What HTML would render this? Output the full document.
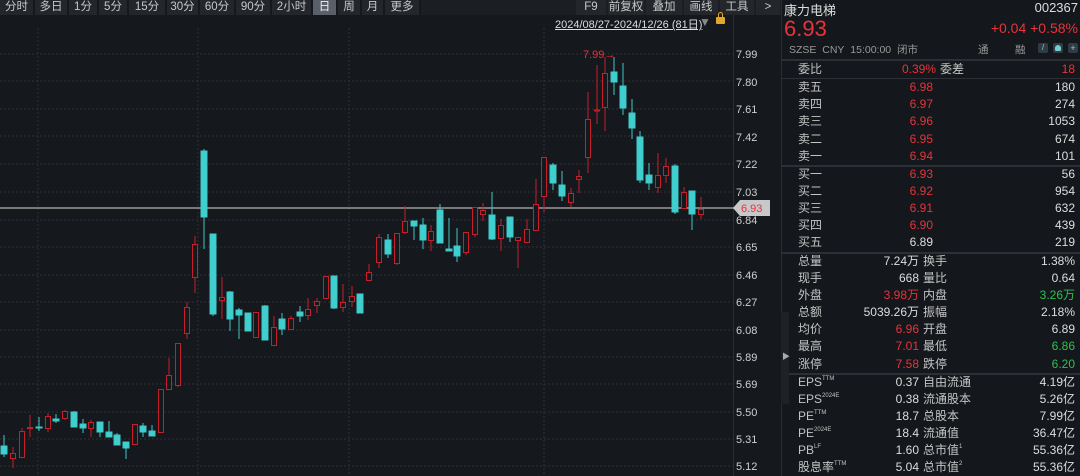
<!DOCTYPE html>
<html><head><meta charset="utf-8"><style>
*{margin:0;padding:0;box-sizing:border-box}
body{width:1080px;height:476px;background:#15181d;font-family:"Liberation Sans","Noto Sans CJK SC",sans-serif;color:#ccc;position:relative;overflow:hidden}
.tb{position:absolute;top:0;height:15px;background:#23262b;font-size:11.5px;color:#c8c8c8;line-height:15px;text-align:center}
.sel{background:#5b5f6a;color:#eee}
.abs{position:absolute;white-space:nowrap}
.rp{position:absolute;left:781px;top:0;width:299px;height:476px;background:#14171b;border-left:1px solid #2a2d33}
.row{position:absolute;left:16px;width:279px;height:17px;font-size:12px;line-height:17px}
.row span{position:absolute}
.l1{left:0;color:#c4c4c4}
.v1{right:158px;color:#ddd}
.l2{left:125px;color:#c4c4c4}
.v2{right:2px;color:#ddd}
.pb{right:144px}
.red{color:#e8333b!important}
.grn{color:#2cc04e!important}
.sep{position:absolute;left:0;width:299px;height:2px;background:#2c2f35}
sup{font-size:6px;vertical-align:top;line-height:10px}
</style></head><body>
<div class="tb" style="left:0;width:33px">分时</div>
<div class="tb" style="left:35px;width:32px">多日</div>
<div class="tb" style="left:69px;width:28px">1分</div>
<div class="tb" style="left:99px;width:28px">5分</div>
<div class="tb" style="left:129px;width:36px">15分</div>
<div class="tb" style="left:167px;width:31px">30分</div>
<div class="tb" style="left:200px;width:34px">60分</div>
<div class="tb" style="left:236px;width:34px">90分</div>
<div class="tb" style="left:272px;width:39px">2小时</div>
<div class="tb sel" style="left:313px;width:23px">日</div>
<div class="tb" style="left:338px;width:22px">周</div>
<div class="tb" style="left:362px;width:21px">月</div>
<div class="tb" style="left:385px;width:34px">更多</div>
<div class="tb" style="left:421px;width:360px;background:#1b1e23"></div>
<div class="tb" style="left:576px;width:30px">F9</div>
<div class="tb" style="left:608px;width:36px">前复权</div>
<div class="tb" style="left:646px;width:36px">叠加</div>
<div class="tb" style="left:684px;width:34px">画线</div>
<div class="tb" style="left:720px;width:34px">工具</div>
<div class="tb" style="left:756px;width:24px">&gt;</div>

<div class="abs" style="left:555px;top:16px;font-size:11px;color:#ddd;text-decoration:underline">2024/08/27-2024/12/26 (81日)</div>
<div class="abs" style="left:699px;top:15px;font-size:12px;color:#888">▼</div>
<div class="abs" style="left:716px;top:17px;width:9px;height:7px;background:#e0a630;border-radius:1px"></div>
<div class="abs" style="left:718px;top:12px;width:5px;height:7px;border:1.5px solid #e0a630;border-bottom:none;border-radius:3px 3px 0 0"></div>

<svg class="abs" style="left:0;top:0" width="781" height="476">
<g stroke="#2e3137" stroke-dasharray="2,2" stroke-width="1">
<line x1="0" x2="733" y1="54" y2="54"/><line x1="0" x2="733" y1="81" y2="81"/><line x1="0" x2="733" y1="109" y2="109"/><line x1="0" x2="733" y1="136" y2="136"/><line x1="0" x2="733" y1="164" y2="164"/><line x1="0" x2="733" y1="192" y2="192"/><line x1="0" x2="733" y1="220" y2="220"/><line x1="0" x2="733" y1="247" y2="247"/><line x1="0" x2="733" y1="275" y2="275"/><line x1="0" x2="733" y1="302" y2="302"/><line x1="0" x2="733" y1="330" y2="330"/><line x1="0" x2="733" y1="357" y2="357"/><line x1="0" x2="733" y1="384" y2="384"/><line x1="0" x2="733" y1="412" y2="412"/><line x1="0" x2="733" y1="439" y2="439"/><line x1="0" x2="733" y1="466" y2="466"/>
<line x1="38" x2="38" y1="28" y2="476"/><line x1="198" x2="198" y1="28" y2="476"/><line x1="349" x2="349" y1="28" y2="476"/><line x1="544" x2="544" y1="28" y2="476"/>
</g>
<line x1="733.5" x2="733.5" y1="15" y2="476" stroke="#2a2d33"/>
<line x1="0" x2="740" y1="208" y2="208" stroke="#9a9a9a" stroke-width="1.5"/>
<polygon points="733,208 740,200 770,200 770,216 740,216" fill="#c8c8c8"/>
<text x="741" y="212" font-size="11" fill="#e8333b" font-family="Liberation Sans">6.93</text>
<g font-size="11" fill="#cfcfcf" font-family="Liberation Sans">
<text x="736" y="58">7.99</text><text x="736" y="86">7.80</text><text x="736" y="113">7.61</text><text x="736" y="141">7.42</text><text x="736" y="168">7.22</text><text x="736" y="196">7.03</text><text x="736" y="224">6.84</text><text x="736" y="251">6.65</text><text x="736" y="279">6.46</text><text x="736" y="306">6.27</text><text x="736" y="334">6.08</text><text x="736" y="361">5.89</text><text x="736" y="388">5.69</text><text x="736" y="416">5.50</text><text x="736" y="443">5.31</text><text x="736" y="470">5.12</text>
</g>
<text x="583" y="58" font-size="11" fill="#e8333b" font-family="Liberation Sans">7.99→</text>
<g stroke-width="1">
<g stroke="#3ec9c9" fill="#3fcfcf">
<line x1="4" x2="4" y1="435" y2="457"/><rect x="1" y="446" width="6" height="8"/>
<line x1="39" x2="39" y1="417" y2="431"/><rect x="36" y="427" width="6" height="1"/>
<line x1="56" x2="56" y1="414" y2="423"/><rect x="53" y="419" width="6" height="2"/>
<line x1="74" x2="74" y1="411" y2="427"/><rect x="71" y="412" width="6" height="15"/>
<line x1="83" x2="83" y1="419" y2="433"/><rect x="80" y="424" width="6" height="4"/>
<line x1="100" x2="100" y1="422" y2="437"/><rect x="97" y="422" width="6" height="10"/>
<line x1="109" x2="109" y1="421" y2="437"/><rect x="106" y="432" width="6" height="5"/>
<line x1="117" x2="117" y1="433" y2="445"/><rect x="114" y="435" width="6" height="10"/>
<line x1="126" x2="126" y1="442" y2="459"/><rect x="123" y="442" width="6" height="6"/>
<line x1="143" x2="143" y1="423" y2="437"/><rect x="140" y="426" width="6" height="6"/>
<line x1="152" x2="152" y1="425" y2="436"/><rect x="149" y="431" width="6" height="5"/>
<line x1="204" x2="204" y1="149" y2="249"/><rect x="201" y="151" width="6" height="66"/>
<line x1="213" x2="213" y1="234" y2="316"/><rect x="210" y="234" width="6" height="80"/>
<line x1="230" x2="230" y1="291" y2="331"/><rect x="227" y="292" width="6" height="27"/>
<line x1="239" x2="239" y1="308" y2="339"/><rect x="236" y="310" width="6" height="5"/>
<line x1="248" x2="248" y1="313" y2="331"/><rect x="245" y="313" width="6" height="18"/>
<line x1="265" x2="265" y1="305" y2="340"/><rect x="262" y="306" width="6" height="34"/>
<line x1="282" x2="282" y1="313" y2="335"/><rect x="279" y="319" width="6" height="10"/>
<line x1="300" x2="300" y1="306" y2="322"/><rect x="297" y="312" width="6" height="4"/>
<line x1="334" x2="334" y1="276" y2="309"/><rect x="331" y="276" width="6" height="32"/>
<line x1="360" x2="360" y1="294" y2="313"/><rect x="357" y="294" width="6" height="19"/>
<line x1="388" x2="388" y1="234" y2="258"/><rect x="385" y="240" width="6" height="14"/>
<line x1="414" x2="414" y1="221" y2="240"/><rect x="411" y="221" width="6" height="5"/>
<line x1="423" x2="423" y1="218" y2="249"/><rect x="420" y="225" width="6" height="15"/>
<line x1="440" x2="440" y1="204" y2="243"/><rect x="437" y="210" width="6" height="33"/>
<line x1="449" x2="449" y1="218" y2="251"/><rect x="446" y="249" width="6" height="2"/>
<line x1="457" x2="457" y1="228" y2="262"/><rect x="454" y="246" width="6" height="10"/>
<line x1="492" x2="492" y1="192" y2="240"/><rect x="489" y="215" width="6" height="24"/>
<line x1="510" x2="510" y1="217" y2="242"/><rect x="507" y="217" width="6" height="20"/>
<line x1="553" x2="553" y1="163" y2="190"/><rect x="550" y="165" width="6" height="18"/>
<line x1="562" x2="562" y1="171" y2="201"/><rect x="559" y="185" width="6" height="11"/>
<line x1="614" x2="614" y1="57" y2="95"/><rect x="611" y="72" width="6" height="10"/>
<line x1="623" x2="623" y1="63" y2="115"/><rect x="620" y="86" width="6" height="22"/>
<line x1="632" x2="632" y1="99" y2="139"/><rect x="629" y="113" width="6" height="15"/>
<line x1="640" x2="640" y1="131" y2="183"/><rect x="637" y="137" width="6" height="43"/>
<line x1="649" x2="649" y1="163" y2="190"/><rect x="646" y="175" width="6" height="8"/>
<line x1="675" x2="675" y1="164" y2="214"/><rect x="672" y="166" width="6" height="46"/>
<line x1="692" x2="692" y1="191" y2="230"/><rect x="689" y="191" width="6" height="23"/>
</g>
<g stroke="#c41f2b" fill="#15181d">
<line x1="13" x2="13" y1="447" y2="468"/><rect x="10.5" y="453.5" width="5" height="5"/>
<line x1="22" x2="22" y1="428" y2="457"/><rect x="19.5" y="431.5" width="5" height="26"/>
<line x1="30" x2="30" y1="415" y2="437"/><rect x="27.5" y="427.5" width="5" height="1"/>
<line x1="48" x2="48" y1="413" y2="432"/><rect x="45.5" y="416.5" width="5" height="12"/>
<line x1="65" x2="65" y1="410" y2="420"/><rect x="62.5" y="411.5" width="5" height="7"/>
<line x1="91" x2="91" y1="420" y2="437"/><rect x="88.5" y="422.5" width="5" height="6"/>
<rect x="132.5" y="424.5" width="5" height="20"/>
<rect x="158.5" y="389.5" width="5" height="43"/>
<line x1="169" x2="169" y1="358" y2="389"/><rect x="166.5" y="375.5" width="5" height="14"/>
<line x1="178" x2="178" y1="343" y2="387"/><rect x="175.5" y="343.5" width="5" height="42"/>
<line x1="187" x2="187" y1="302" y2="339"/><rect x="184.5" y="307.5" width="5" height="26"/>
<line x1="195" x2="195" y1="236" y2="293"/><rect x="192.5" y="244.5" width="5" height="33"/>
<line x1="222" x2="222" y1="277" y2="319"/><rect x="219.5" y="297.5" width="5" height="3"/>
<rect x="253.5" y="312.5" width="5" height="25"/>
<line x1="274" x2="274" y1="316" y2="345"/><rect x="271.5" y="327.5" width="5" height="18"/>
<line x1="291" x2="291" y1="316" y2="330"/><rect x="288.5" y="318.5" width="5" height="11"/>
<line x1="308" x2="308" y1="298" y2="320"/><rect x="305.5" y="309.5" width="5" height="6"/>
<line x1="317" x2="317" y1="298" y2="313"/><rect x="314.5" y="301.5" width="5" height="4"/>
<rect x="323.5" y="276.5" width="5" height="22"/>
<line x1="343" x2="343" y1="284" y2="312"/><rect x="340.5" y="302.5" width="5" height="5"/>
<line x1="352" x2="352" y1="286" y2="307"/><rect x="349.5" y="296.5" width="5" height="5"/>
<line x1="369" x2="369" y1="264" y2="280"/><rect x="366.5" y="272.5" width="5" height="8"/>
<line x1="379" x2="379" y1="234" y2="268"/><rect x="376.5" y="237.5" width="5" height="25"/>
<line x1="397" x2="397" y1="233" y2="265"/><rect x="394.5" y="233.5" width="5" height="30"/>
<line x1="405" x2="405" y1="206" y2="234"/><rect x="402.5" y="221.5" width="5" height="11"/>
<line x1="431" x2="431" y1="225" y2="251"/><rect x="428.5" y="231.5" width="5" height="9"/>
<line x1="466" x2="466" y1="232" y2="255"/><rect x="463.5" y="232.5" width="5" height="20"/>
<line x1="475" x2="475" y1="207" y2="237"/><rect x="472.5" y="207.5" width="5" height="27"/>
<line x1="483" x2="483" y1="203" y2="221"/><rect x="480.5" y="210.5" width="5" height="4"/>
<line x1="501" x2="501" y1="219" y2="251"/><rect x="498.5" y="225.5" width="5" height="13"/>
<line x1="518" x2="518" y1="237" y2="268"/><rect x="515.5" y="237.5" width="5" height="3"/>
<line x1="527" x2="527" y1="219" y2="242"/><rect x="524.5" y="229.5" width="5" height="13"/>
<line x1="536" x2="536" y1="179" y2="230"/><rect x="533.5" y="204.5" width="5" height="26"/>
<line x1="544" x2="544" y1="157" y2="212"/><rect x="541.5" y="157.5" width="5" height="39"/>
<line x1="571" x2="571" y1="188" y2="207"/><rect x="568.5" y="193.5" width="5" height="9"/>
<line x1="579" x2="579" y1="170" y2="193"/><rect x="576.5" y="176.5" width="5" height="3"/>
<line x1="588" x2="588" y1="92" y2="173"/><rect x="585.5" y="119.5" width="5" height="38"/>
<line x1="597" x2="597" y1="65" y2="124"/><rect x="594.5" y="110" width="5" height="1"/>
<line x1="605" x2="605" y1="57" y2="131"/><rect x="602.5" y="73.5" width="5" height="34"/>
<line x1="658" x2="658" y1="153" y2="193"/><rect x="655.5" y="175.5" width="5" height="12"/>
<line x1="666" x2="666" y1="158" y2="183"/><rect x="663.5" y="166.5" width="5" height="9"/>
<line x1="684" x2="684" y1="187" y2="208"/><rect x="681.5" y="192.5" width="5" height="16"/>
<line x1="701" x2="701" y1="197" y2="219"/><rect x="698.5" y="209.5" width="5" height="5"/>
</g>
</g>
</svg>

<div class="rp">
<div class="abs" style="left:2px;top:0px;font-size:13px;color:#ddd">康力电梯</div>
<div class="abs" style="right:2px;top:0px;font-size:13px;color:#ddd">002367</div>
<div class="abs" style="left:2px;top:16px;font-size:22px;color:#e8333b">6.93</div>
<div class="abs" style="right:2px;top:20px;font-size:14px;color:#e8333b">+0.04 +0.58%</div>
<div class="abs" style="left:7px;top:42px;font-size:10.5px;color:#999">SZSE&nbsp; CNY&nbsp; 15:00:00&nbsp; 闭市</div>
<div class="abs" style="left:196px;top:42px;font-size:10.5px;color:#999">通</div>
<div class="abs" style="left:233px;top:42px;font-size:10.5px;color:#999">融</div>
<div class="abs" style="left:256px;top:43px;width:10px;height:10px;background:#2f3b45;border-radius:2px;color:#9cc;font-size:8px;text-align:center;line-height:10px">/</div>
<div class="abs" style="left:271px;top:43px;width:10px;height:10px;background:#2f3b45;border-radius:2px"><div style="margin:2px;width:6px;height:6px;background:#7cc;border-radius:3px 3px 1px 1px"></div></div>
<div class="abs" style="left:286px;top:43px;width:10px;height:10px;background:#2f3b45;border-radius:2px;color:#9cc;font-size:9px;text-align:center;line-height:10px">+</div>
<div class="sep" style="top:59px"></div>
<div class="row" style="top:61px"><span class="l1">委比</span><span class="red" style="right:141px">0.39%</span><span class="l2" style="left:142px">委差</span><span class="v2 red">18</span></div>
<div class="sep" style="top:78px;height:1px"></div>
<div class="row" style="top:79px"><span class="l1">卖五</span><span class="pb red">6.98</span><span class="v2">180</span></div>
<div class="row" style="top:96px"><span class="l1">卖四</span><span class="pb red">6.97</span><span class="v2">274</span></div>
<div class="row" style="top:113px"><span class="l1">卖三</span><span class="pb red">6.96</span><span class="v2">1053</span></div>
<div class="row" style="top:131px"><span class="l1">卖二</span><span class="pb red">6.95</span><span class="v2">674</span></div>
<div class="row" style="top:148px"><span class="l1">卖一</span><span class="pb red">6.94</span><span class="v2">101</span></div>
<div class="sep" style="top:165px"></div>
<div class="row" style="top:166px"><span class="l1">买一</span><span class="pb red">6.93</span><span class="v2">56</span></div>
<div class="row" style="top:183px"><span class="l1">买二</span><span class="pb red">6.92</span><span class="v2">954</span></div>
<div class="row" style="top:200px"><span class="l1">买三</span><span class="pb red">6.91</span><span class="v2">632</span></div>
<div class="row" style="top:217px"><span class="l1">买四</span><span class="pb red">6.90</span><span class="v2">439</span></div>
<div class="row" style="top:234px"><span class="l1">买五</span><span class="pb" style="color:#ddd">6.89</span><span class="v2">219</span></div>
<div class="sep" style="top:252px"></div>
<div class="row" style="top:253px"><span class="l1">总量</span><span class="v1">7.24万</span><span class="l2">换手</span><span class="v2">1.38%</span></div>
<div class="row" style="top:270px"><span class="l1">现手</span><span class="v1">668</span><span class="l2">量比</span><span class="v2">0.64</span></div>
<div class="row" style="top:287px"><span class="l1">外盘</span><span class="v1 red">3.98万</span><span class="l2">内盘</span><span class="v2 grn">3.26万</span></div>
<div class="row" style="top:304px"><span class="l1">总额</span><span class="v1">5039.26万</span><span class="l2">振幅</span><span class="v2">2.18%</span></div>
<div class="row" style="top:321px"><span class="l1">均价</span><span class="v1 red">6.96</span><span class="l2">开盘</span><span class="v2">6.89</span></div>
<div class="row" style="top:338px"><span class="l1">最高</span><span class="v1 red">7.01</span><span class="l2">最低</span><span class="v2 grn">6.86</span></div>
<div class="row" style="top:356px"><span class="l1">涨停</span><span class="v1 red">7.58</span><span class="l2">跌停</span><span class="v2 grn">6.20</span></div>
<div class="sep" style="top:373px"></div>
<div class="row" style="top:374px"><span class="l1">EPS<sup>TTM</sup></span><span class="v1">0.37</span><span class="l2">自由流通</span><span class="v2">4.19亿</span></div>
<div class="row" style="top:391px"><span class="l1">EPS<sup>2024E</sup></span><span class="v1">0.38</span><span class="l2">流通股本</span><span class="v2">5.26亿</span></div>
<div class="row" style="top:408px"><span class="l1">PE<sup>TTM</sup></span><span class="v1">18.7</span><span class="l2">总股本</span><span class="v2">7.99亿</span></div>
<div class="row" style="top:425px"><span class="l1">PE<sup>2024E</sup></span><span class="v1">18.4</span><span class="l2">流通值</span><span class="v2">36.47亿</span></div>
<div class="row" style="top:442px"><span class="l1">PB<sup>LF</sup></span><span class="v1">1.60</span><span class="l2">总市值<sup>1</sup></span><span class="v2">55.36亿</span></div>
<div class="row" style="top:459px"><span class="l1">股息率<sup>TTM</sup></span><span class="v1">5.04</span><span class="l2">总市值<sup>2</sup></span><span class="v2">55.36亿</span></div>
<div class="abs" style="left:-1px;top:312px;width:8px;height:92px;background:#1e2126"></div>
<div class="abs" style="left:0;top:351px;font-size:8px;color:#aaa">▶</div>
</div>
</body></html>
